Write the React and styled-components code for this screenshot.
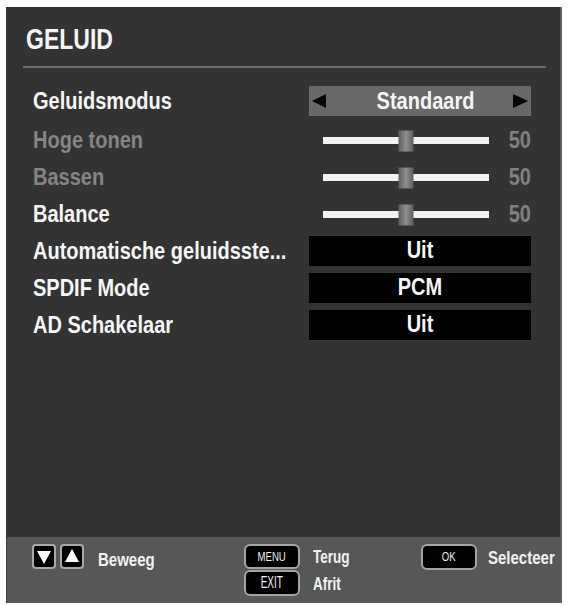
import React from "react";
import styled, { createGlobalStyle } from "styled-components";

const GlobalStyle = createGlobalStyle`
  html, body { margin: 0; padding: 0; background: #ffffff; }
  body { font-family: "Liberation Sans", Arial, Helvetica, sans-serif; }
`;

const Panel = styled.div`
  box-sizing: border-box;
  margin: 7px 0 0 6px;
  width: 556px;
  height: 596px;
  background: #333333;
  border-right: 2px solid #5e5e5e;
  border-left: 1px solid #3a3a3a;
  display: flex;
  flex-direction: column;
`;

const Header = styled.div`
  padding: 19px 0 0 19px;
  height: 26px;
`;

const Stretch = styled.span`
  display: inline-block;
  transform: scale(${(p) => p.$sx || 1}, ${(p) => p.$sy || 1.15});
  transform-origin: ${(p) => p.$origin || "center"};
  white-space: nowrap;
`;

const Title = styled.h1`
  margin: 0;
  font-size: 23px;
  line-height: 26px;
  font-weight: bold;
  color: #f4f4f4;
`;

const Divider = styled.div`
  height: 2px;
  background: #6c6c6c;
  margin: 14px 14px 0 16px;
`;

const List = styled.div`
  margin-top: 13px;
  display: flex;
  flex-direction: column;
`;

const Row = styled.div`
  height: ${(p) => p.$h || 37}px;
  display: flex;
  align-items: center;
  justify-content: space-between;
  padding: 0 29px 0 26px;
`;

const Label = styled.div`
  font-size: 20px;
  line-height: 24px;
  font-weight: bold;
  color: ${(p) => (p.$disabled ? "#858585" : "#f6f6f6")};
`;

const Control = styled.div`
  width: 222px;
  height: 30px;
  box-sizing: border-box;
  display: flex;
  align-items: center;
`;

const Selector = styled(Control)`
  background: #686868;
  padding: 0 3px 0 3px;
  justify-content: space-between;
`;

const Arrow = styled.span`
  width: 0;
  height: 0;
  border-top: 7.5px solid transparent;
  border-bottom: 7.5px solid transparent;
  ${(p) =>
    p.$dir === "left"
      ? "border-right: 14px solid #050505;"
      : "border-left: 15px solid #050505;"}
`;

const SelectorText = styled.span`
  flex: 1;
  text-align: center;
  padding-left: 12px;
  font-size: 20px;
  font-weight: bold;
  color: #f6f6f6;
`;

const ValueBox = styled(Control)`
  background: #000000;
  justify-content: center;
  font-size: 20px;
  font-weight: bold;
  color: #f6f6f6;
`;

const SliderControl = styled(Control)`
  padding-left: 14px;
`;

const Track = styled.div`
  position: relative;
  width: 166px;
  height: 7px;
  background: #f2f2f2;
  margin-top: 2px;
`;

const Thumb = styled.div`
  position: absolute;
  top: 50%;
  width: 15px;
  height: 21px;
  transform: translate(-50%, -50%);
  background: linear-gradient(to right, #5d5d5d, #8e8e8e 50%, #5d5d5d);
`;

const SliderValue = styled.span`
  margin-left: auto;
  font-size: 20px;
  font-weight: bold;
  color: #808080;
  margin-top: 2px;
`;

const Footer = styled.div`
  margin-top: auto;
  height: 66px;
  box-sizing: border-box;
  background: #575757;
  padding: 7px 0 0 25px;
  display: grid;
  grid-template-columns: 212px 177px 1fr;
  align-items: start;
`;

const HintGroup = styled.div`
  display: flex;
  align-items: center;
  gap: ${(p) => p.$gap || 0}px;
`;

const HintStack = styled.div`
  display: flex;
  flex-direction: column;
  gap: 1px;
`;

const ArrowKey = styled.div`
  box-sizing: border-box;
  width: 24px;
  height: 25px;
  background: #000;
  border: 2px solid #a9a9a9;
  border-radius: 4px;
  display: flex;
  align-items: center;
  justify-content: center;
`;

const KeyTriangle = styled.span`
  width: 0;
  height: 0;
  border-left: 7px solid transparent;
  border-right: 7px solid transparent;
  ${(p) =>
    p.$dir === "up"
      ? "border-bottom: 13px solid #ffffff; margin-top: -2px;"
      : "border-top: 13px solid #ffffff; margin-top: 2px;"}
`;

const KeyCap = styled.div`
  box-sizing: border-box;
  width: 56px;
  height: ${(p) => p.$h || 25}px;
  background: #000;
  border: 2px solid #a4a4a4;
  border-radius: 6px;
  display: flex;
  align-items: center;
  justify-content: center;
  color: #f0f0f0;
  font-size: ${(p) => p.$fs || 11}px;
  font-weight: normal;
`;

const HintLabel = styled.span`
  font-size: ${(p) => p.$fs || 15}px;
  font-weight: bold;
  color: #f2f2f2;
  margin-left: ${(p) => p.$ml || 0}px;
  margin-top: ${(p) => p.$mt || 0}px;
`;

const KeyRow = styled.div`
  display: flex;
  align-items: center;
`;

function Slider({ value }) {
  return (
    <SliderControl>
      <Track>
        <Thumb style={{ left: `${value}%` }} />
      </Track>
      <SliderValue>
        <Stretch>{value}</Stretch>
      </SliderValue>
    </SliderControl>
  );
}

export default function App() {
  return (
    <>
      <GlobalStyle />
      <Panel>
        <Header>
          <Title>
            <Stretch $sy={1.3}>GELUID</Stretch>
          </Title>
        </Header>
        <Divider />
        <List>
          <Row $h={40}>
            <Label>
              <Stretch>Geluidsmodus</Stretch>
            </Label>
            <Selector>
              <Arrow $dir="left" />
              <SelectorText>
                <Stretch>Standaard</Stretch>
              </SelectorText>
              <Arrow $dir="right" />
            </Selector>
          </Row>
          <Row>
            <Label $disabled>
              <Stretch>Hoge tonen</Stretch>
            </Label>
            <Slider value={50} />
          </Row>
          <Row>
            <Label $disabled>
              <Stretch>Bassen</Stretch>
            </Label>
            <Slider value={50} />
          </Row>
          <Row>
            <Label>
              <Stretch>Balance</Stretch>
            </Label>
            <Slider value={50} />
          </Row>
          <Row>
            <Label>
              <Stretch>Automatische geluidsste...</Stretch>
            </Label>
            <ValueBox>
              <Stretch>Uit</Stretch>
            </ValueBox>
          </Row>
          <Row>
            <Label>
              <Stretch>SPDIF Mode</Stretch>
            </Label>
            <ValueBox>
              <Stretch>PCM</Stretch>
            </ValueBox>
          </Row>
          <Row>
            <Label>
              <Stretch>AD Schakelaar</Stretch>
            </Label>
            <ValueBox>
              <Stretch>Uit</Stretch>
            </ValueBox>
          </Row>
        </List>
        <Footer>
          <HintGroup $gap={4}>
            <ArrowKey>
              <KeyTriangle $dir="down" />
            </ArrowKey>
            <ArrowKey>
              <KeyTriangle $dir="up" />
            </ArrowKey>
            <HintLabel $ml={10} $mt={6}>
              <Stretch $sy={1.2}>Beweeg</Stretch>
            </HintLabel>
          </HintGroup>
          <HintStack>
            <KeyRow>
              <KeyCap $fs={12}>
                <Stretch $sx={0.8} $sy={1.05}>MENU</Stretch>
              </KeyCap>
              <HintLabel $ml={13}>
                <Stretch $sx={0.9} $sy={1.2} $origin="left center">Terug</Stretch>
              </HintLabel>
            </KeyRow>
            <KeyRow>
              <KeyCap $h={26} $fs={16}>
                <Stretch $sx={0.62} $sy={1.05}>EXIT</Stretch>
              </KeyCap>
              <HintLabel $ml={13}>
                <Stretch $sx={0.9} $sy={1.2} $origin="left center">Afrit</Stretch>
              </HintLabel>
            </KeyRow>
          </HintStack>
          <HintGroup>
            <KeyCap $h={26} $fs={12}>
              <Stretch $sx={0.8} $sy={1.05}>OK</Stretch>
            </KeyCap>
            <HintLabel $ml={11}>
              <Stretch $sy={1.2} $origin="left center">Selecteer</Stretch>
            </HintLabel>
          </HintGroup>
        </Footer>
      </Panel>
    </>
  );
}
